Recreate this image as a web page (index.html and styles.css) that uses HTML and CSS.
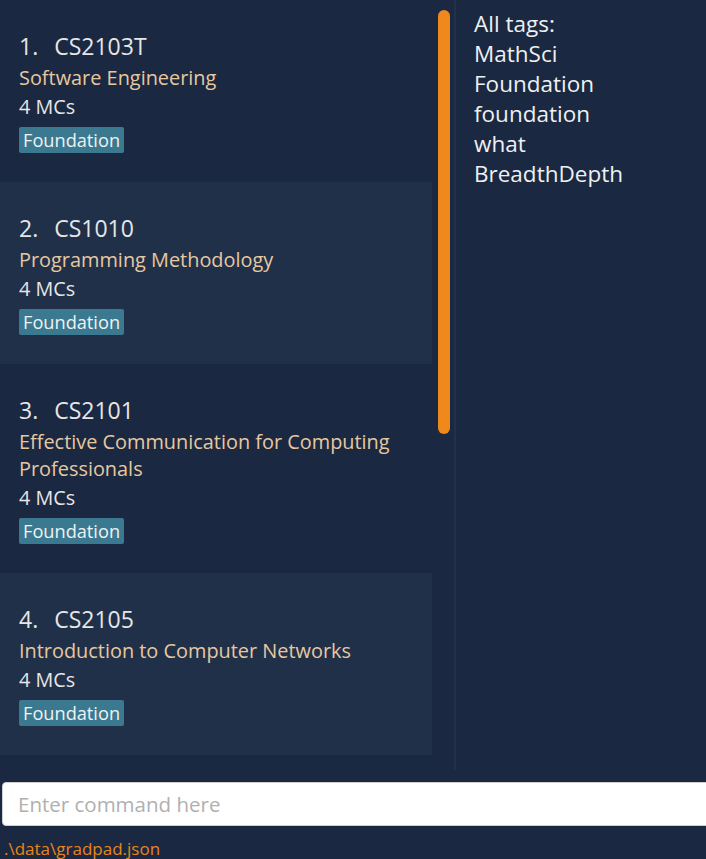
FILE: index.html
```html
<!DOCTYPE html>
<html>
<head>
<meta charset="utf-8">
<link rel="stylesheet" href="styles.css">
</head>
<body>
<div class="app">
  <div class="main">
    <div class="list-pane">
      <div class="cards">
        <div class="card">
          <div class="code"><span class="idx">1.</span>CS2103T</div>
          <div class="name">Software Engineering</div>
          <div class="mc">4 MCs</div>
          <div class="tags"><span class="tag">Foundation</span></div>
        </div>
        <div class="card alt">
          <div class="code"><span class="idx">2.</span>CS1010</div>
          <div class="name">Programming Methodology</div>
          <div class="mc">4 MCs</div>
          <div class="tags"><span class="tag">Foundation</span></div>
        </div>
        <div class="card tall">
          <div class="code"><span class="idx">3.</span>CS2101</div>
          <div class="name">Effective Communication for Computing Professionals</div>
          <div class="mc">4 MCs</div>
          <div class="tags"><span class="tag">Foundation</span></div>
        </div>
        <div class="card alt">
          <div class="code"><span class="idx">4.</span>CS2105</div>
          <div class="name">Introduction to Computer Networks</div>
          <div class="mc">4 MCs</div>
          <div class="tags"><span class="tag">Foundation</span></div>
        </div>
      </div>
      <div class="track"><div class="thumb"></div></div>
    </div>
    <div class="divider"></div>
    <div class="tag-pane">
      <div>All tags:</div>
      <div>MathSci</div>
      <div>Foundation</div>
      <div>foundation</div>
      <div>what</div>
      <div>BreadthDepth</div>
    </div>
  </div>
  <div class="command">
    <input class="command-input" type="text" placeholder="Enter command here">
  </div>
  <div class="status">.\data\gradpad.json</div>
</div>
</body>
</html>
```
FILE: styles.css
```css
html, body {
  margin: 0;
  padding: 0;
  background: #1b2841;
  width: 706px;
  height: 859px;
  overflow: hidden;
  font-family: "Open Sans", "Noto Sans", sans-serif;
}
.app {
  display: flex;
  flex-direction: column;
  height: 859px;
}
.main {
  display: flex;
  height: 771px;
}
.list-pane {
  display: flex;
  width: 454px;
  height: 771px;
  overflow: hidden;
}
.cards {
  width: 432px;
  display: flex;
  flex-direction: column;
}
.card {
  background: #1b2841;
  padding: 33px 19px 0;
  box-sizing: border-box;
  height: 182px;
  flex: none;
}
.card.tall { height: 209px; }
.card.alt { background: #213049; }
.code {
  color: #e6e6e6;
  font-size: 23px;
  line-height: 26px;
}
.idx { margin-right: 16px; }
.name {
  color: #e6c8a0;
  font-size: 19.9px;
  line-height: 27px;
  margin-top: 5px;
}
.mc {
  color: #e6e6e6;
  font-size: 19.8px;
  line-height: 32px;
}
.tags { margin-top: 4px; display: flex; }
.tag {
  background: #3b7990;
  color: #eef2f4;
  font-size: 18.2px;
  line-height: 26px;
  padding: 0 4px;
  border-radius: 2px;
}
.track {
  width: 22px;
  padding-top: 10px;
  display: flex;
  justify-content: center;
}
.thumb {
  width: 12px;
  height: 424px;
  background: #f0891b;
  border-radius: 6px;
  margin-left: 2px;
}
.divider {
  width: 2px;
  background: #22314a;
  height: 770px;
}
.tag-pane {
  padding: 9px 0 0 18px;
  color: #eef0f2;
  font-size: 22.5px;
  line-height: 30px;
}
.command {
  padding: 11px 0 0 2px;
}
.command-input {
  display: block;
  box-sizing: border-box;
  width: 720px;
  height: 44px;
  border: 1px solid #cfcfcf;
  border-radius: 4px;
  background: #fff;
  padding: 0 0 0 15px;
  font-family: "Open Sans", "Noto Sans", sans-serif;
  font-size: 20.5px;
  outline: none;
}
.command-input::placeholder { color: #b0b0b0; }
.status {
  color: #e8841a;
  font-size: 17px;
  line-height: 22px;
  padding: 12px 0 0 4px;
}
```
